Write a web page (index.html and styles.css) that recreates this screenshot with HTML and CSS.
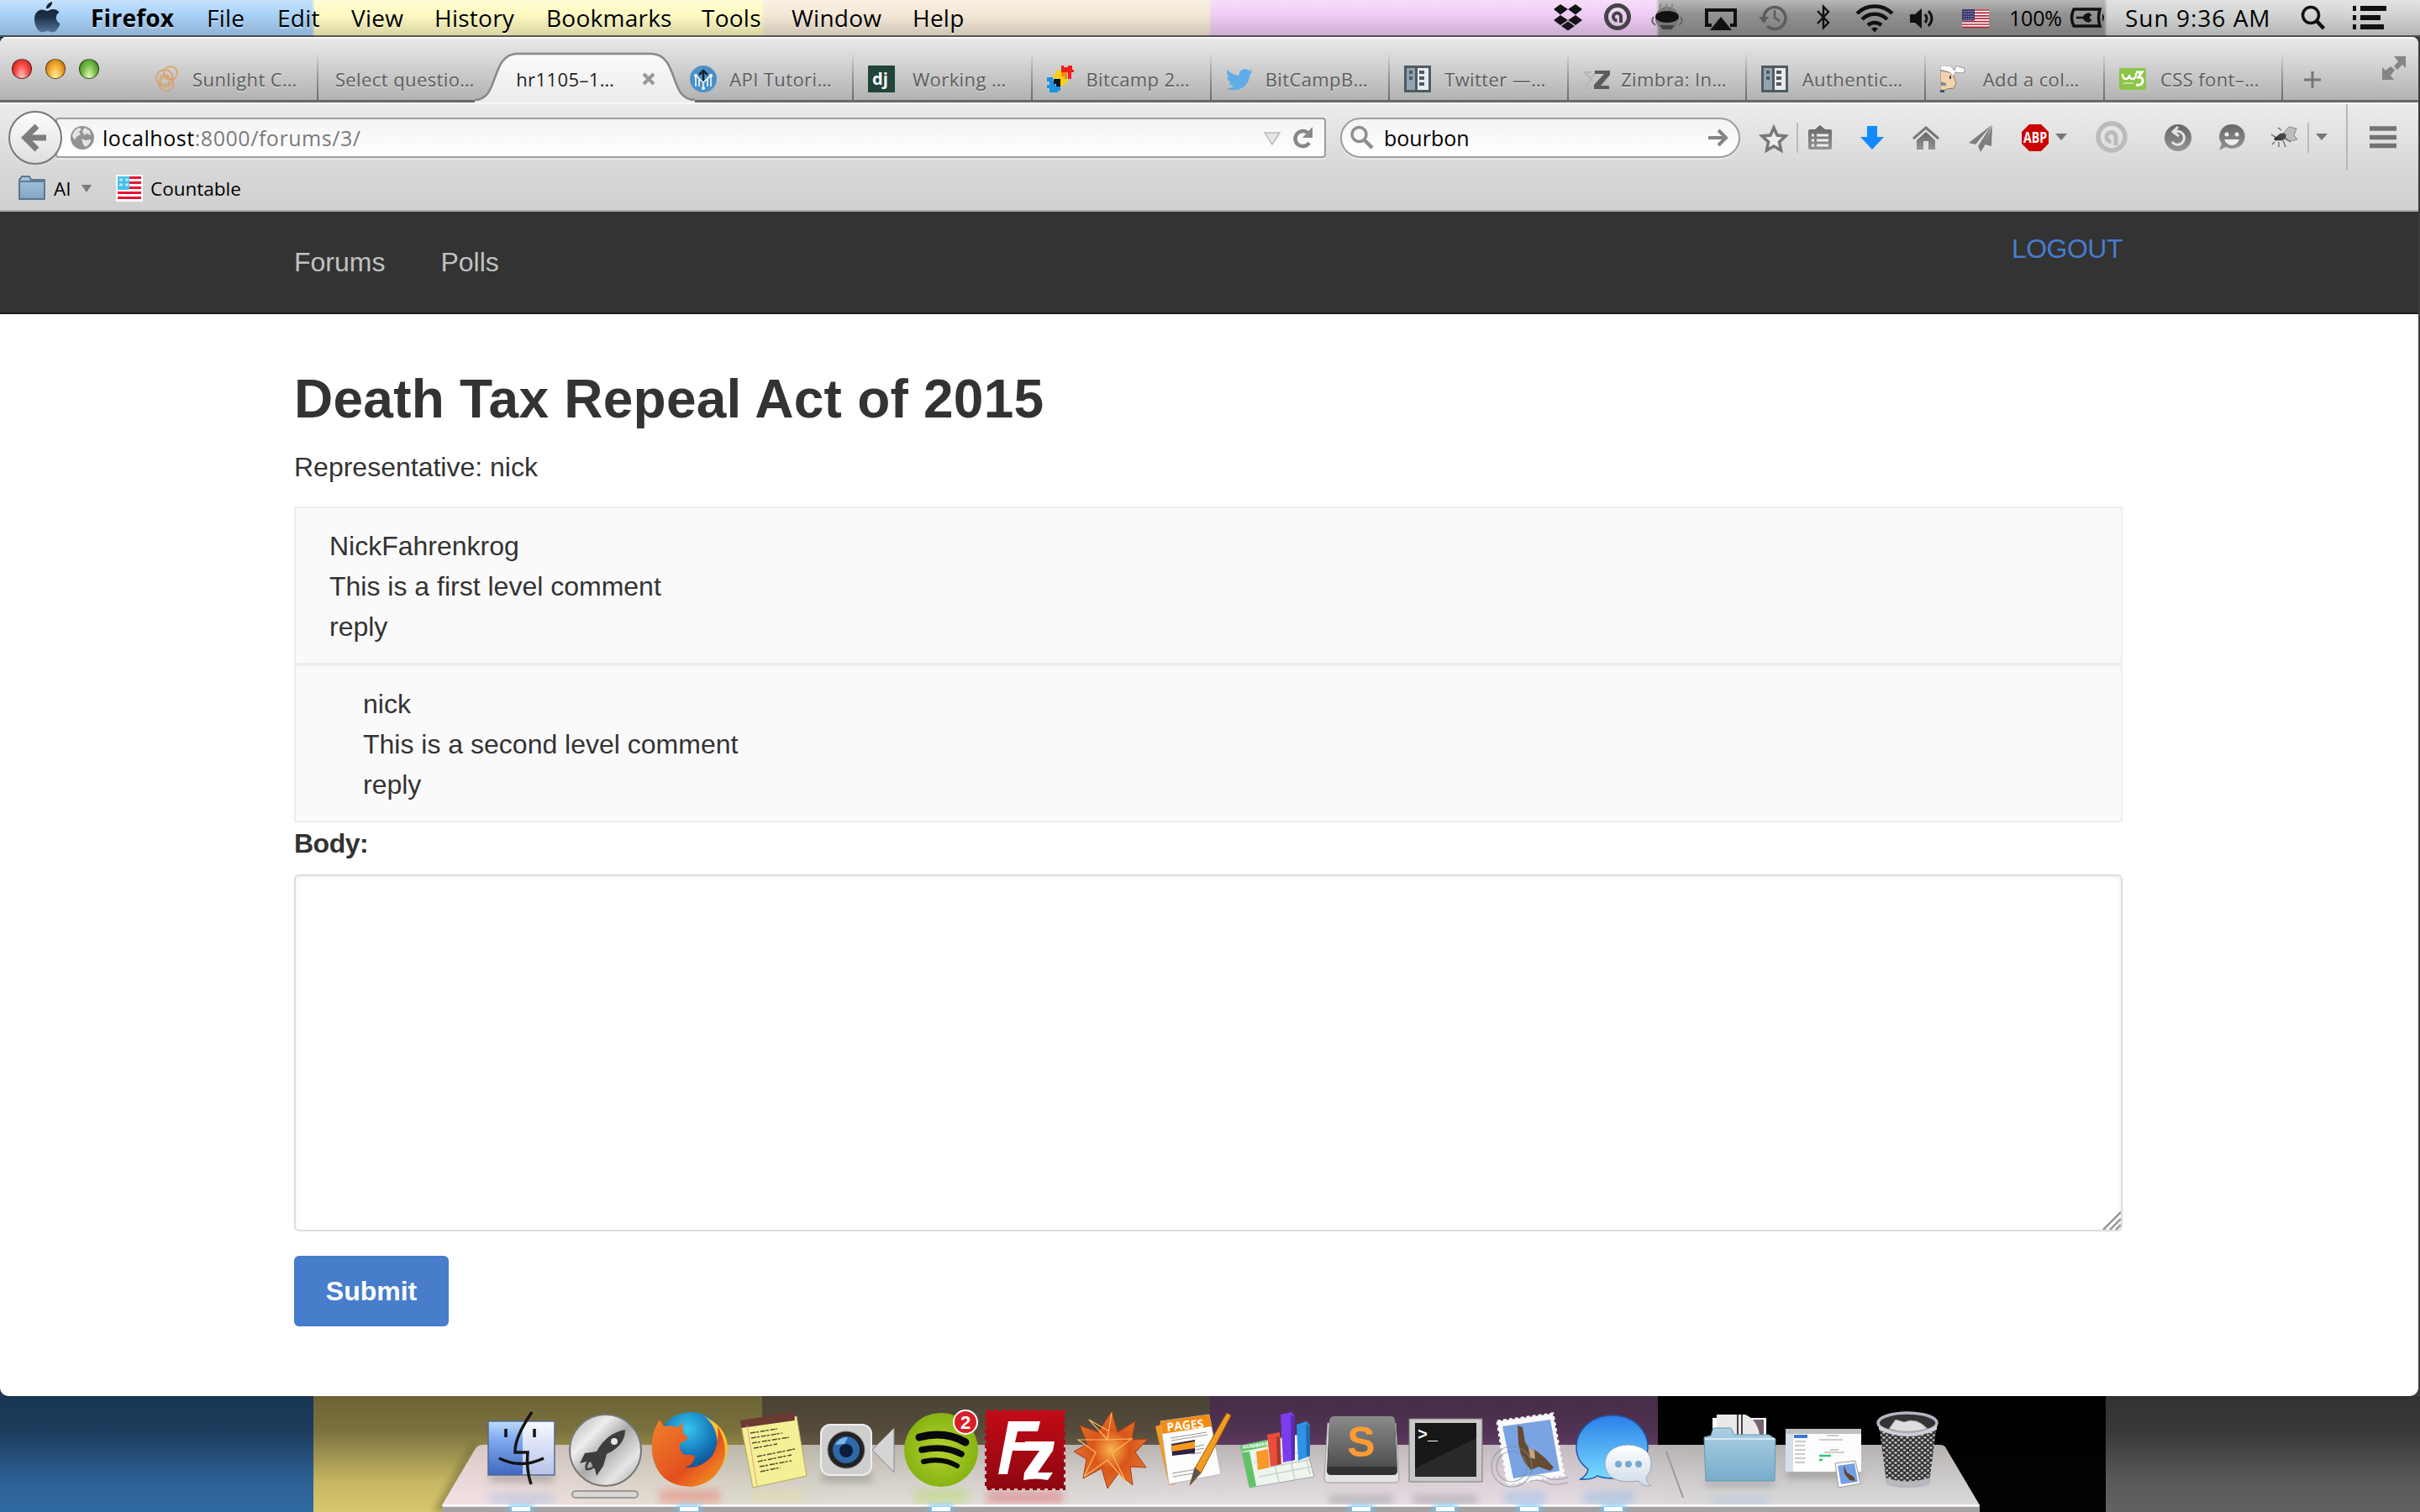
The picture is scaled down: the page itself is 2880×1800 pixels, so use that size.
FILE: index.html
```html
<!DOCTYPE html>
<html lang="en">
<head>
<meta charset="utf-8">
<title>hr1105-114</title>
<link rel="stylesheet" href="styles.css">
</head>
<body>
<header class="menubar">
  <nav class="menus">
    <svg class="apple" viewBox="0 0 32 38" width="32" height="38"><defs><linearGradient id="ap" x1="0" y1="0" x2="0" y2="1"><stop offset="0" stop-color="#10202e"/><stop offset=".5" stop-color="#1c3046"/><stop offset="1" stop-color="#55789c"/></linearGradient></defs><path fill="url(#ap)" d="M22 0c.5 4-3 8-7 8.500C14.500 5 18 1 22 0zM16 11c2 0 3.500-2 7.500-2 3 0 5.500 1.500 7 3.700-5.500 3.300-4.500 10.800 1 13.300-1.500 5-5 10.500-8.500 10.500-2.500 0-3.500-1.500-6.500-1.500s-4 1.500-6.500 1.500C5.500 36.500 1 28 1 21 1 13.500 5.500 9.500 10 9.500c2.500 0 4.500 1.500 6 1.500z"/></svg>
    <b>Firefox</b><span>File</span><span>Edit</span><span>View</span><span>History</span><span>Bookmarks</span><span>Tools</span><span>Window</span><span>Help</span>
  </nav>
  <div class="status">
    <svg viewBox="1840 0 545 42" width="545" height="42">
      <g fill="#151515"><path d="M1856 5l9 6-9 6.500-8-6.500zM1874 5l8 6-8 6.500-9-6.500zM1856 18l9 6-9 6-8-6zM1874 18l8 6-8 6-9-6zM1865 25.500l8 5.500-8 5.500-8-5.500z"/></g>
      <circle cx="1924" cy="20" r="13.500" fill="none" stroke="#444" stroke-width="5"/><path d="M1928 27V20a4.500 4.500 0 1 0-4.500 4.500" fill="none" stroke="#444" stroke-width="4"/>
      <circle cx="1983" cy="22" r="14" fill="#777"/><ellipse cx="1983" cy="20" rx="14" ry="7" fill="#111"/><path d="M1974 30h18l-4 5h-10z" fill="#444"/><path d="M1967 20q-4 6 2 10m30-10q4 6-2 10" stroke="#666" stroke-width="2" fill="none"/><path d="M1976 12q-3-4 0-7m7 7q-3-4 0-7m7 7q-3-4 0-7" stroke="#888" stroke-width="2" fill="none"/>
      <path d="M2036 30h-6V12h34v18h-6" fill="none" stroke="#111" stroke-width="4"/><path d="M2047 20l13 16h-26z" fill="#111"/>
      <g fill="none" stroke="#5c5c5c" stroke-width="3.500"><path d="M2098 21a13 13 0 1 1 4 10"/><path d="M2111 12v9l6 4" stroke-width="2.500"/></g><path d="M2092 20h12l-6 8z" fill="#5c5c5c"/>
      <path d="M2162 13l13 14-6 6V8l6 6-13 14" fill="none" stroke="#111" stroke-width="2.400"/>
      <g fill="none" stroke="#111" stroke-width="4.500"><path d="M2209 16a30 30 0 0 1 42 0"/><path d="M2215 23a21 21 0 0 1 30 0"/><path d="M2222 30a12 12 0 0 1 16 0"/></g><path d="M2226 34q4-3 8 0l-4 4.500z" fill="#111"/>
      <path d="M2272 17h6l8-7v24l-8-7h-6z" fill="#111"/><path d="M2290 17q4 5 0 10M2294 13q8 9 0 18" fill="none" stroke="#111" stroke-width="3"/>
      <g><path fill="#fff" d="M2334 11h32v22h-32z"/><path stroke="#b22234" stroke-width="1.700" d="M2334 12h32m-32 3.400h32m-32 3.400h32m-32 3.400h32m-32 3.400h32m-32 3.400h32m-32 3.400h32"/><path fill="#3c3b6e" d="M2334 11h15v13.500h-15z"/><path d="M2336 13.500h12m-12 3h12m-12 3h12m-12 3h12" stroke="#bbc" stroke-width="1" stroke-dasharray="1 1.600"/></g>
    </svg>
    <span class="pct">100%</span>
    <svg viewBox="2461 8 44 28" width="44" height="28"><path d="M2499 12h-31q-5 10 0 20h31q-3-10 0-20z" fill="none" stroke="#111" stroke-width="3.500"/><path d="M2502 17q4 5 0 10z" fill="#111"/><path d="M2471 22h9m9-3h-7m7 6h-7" stroke="#111" stroke-width="2.600"/><path d="M2487 16v12q-8-1-8-6t8-6z" fill="#111"/></svg>
    <span class="clock">Sun 9:36 AM</span>
    <svg viewBox="2737 4 34 34" width="34" height="34"><circle cx="2750" cy="18" r="9.500" fill="none" stroke="#111" stroke-width="3.500"/><path d="M2757 25l8.500 9" stroke="#111" stroke-width="4.500"/></svg>
    <svg class="list" viewBox="0 0 44 28" width="44" height="28"><path d="M2 3h4m-4 11h4m-4 11h4M11 3h31M11 14h24M11 25h28" stroke="#111" stroke-width="6"/></svg>
  </div>
</header>

<main class="window">
  <section class="tabs">
    <div class="lights"><i class="red"></i><i class="amber"></i><i class="green"></i></div>
    <div class="tab first"><svg viewBox="0 0 32 32" width="32" height="32"><g fill="none" stroke="#d9a062" stroke-width="1.500"><circle cx="13" cy="15" r="10"/><circle cx="20" cy="9" r="8"/><circle cx="15" cy="22" r="8.500"/><circle cx="13" cy="17" r="6"/></g></svg><span>Sunlight C…</span></div>
    <div class="tab plain"><span>Select questio…</span></div>
    <div class="tab active">
      <svg class="shape" viewBox="0 0 262 60" width="262" height="60"><defs><linearGradient id="tg" x1="0" y1="0" x2="0" y2="1"><stop offset="0" stop-color="#fafafa"/><stop offset="1" stop-color="#ececec"/></linearGradient></defs><path d="M0 60V57C30 57 18 3 50 2H210C244 3 230 57 262 57V60z" fill="url(#tg)"/><path d="M0 57C30 57 18 3 50 2H210C244 3 230 57 262 57" fill="none" stroke="#888" stroke-width="2.500"/></svg>
      <span>hr1105–1…</span><svg class="close" viewBox="0 0 16 16" width="16" height="16"><path d="M2 2l12 12M14 2L2 14" stroke="#999" stroke-width="4"/></svg></div>
    <div class="tab after"><svg viewBox="0 0 32 32" width="32" height="32"><circle cx="16" cy="16" r="16" fill="#4a90c8"/><path d="M16 19V6m-5 5l5-5 5 5" stroke="#123" stroke-width="2.500" fill="none"/><path d="M7 12v13M7 12l9 8 9-8v13M11 15v10M21 15v10M16 20v6" stroke="#fff" stroke-width="1.500" fill="none"/><g fill="#fff"><circle cx="7" cy="12" r="2"/><circle cx="25" cy="12" r="2"/><circle cx="16" cy="27" r="2"/></g></svg><span>API Tutori…</span></div>
    <div class="tab"><svg viewBox="0 0 32 32" width="32" height="32"><rect width="32" height="32" rx="1" fill="#20443a"/><text x="5" y="23" class="dj">dj</text></svg><span>Working …</span></div>
    <div class="tab"><svg viewBox="0 0 32 32" width="32" height="32" shape-rendering="crispEdges"><path fill="#f21d1d" d="M17 0h3v2h5V0h5v5h2v3h-3v8h-4V8h-8z"/><path fill="#fcd20a" d="M11 6h6v3h5v5h2v7h-3v3h-5v-9H8v-5h3z"/><path fill="#f7861c" d="M17 8h7v8h-3v-3h-4z"/><path fill="#1a93dc" d="M0 14h7v4h3v6h6v6h-3v2H3v-5H0v-4h3v-4H0z"/><path fill="#111" d="M8 16h8v9h-5v-3H8z"/></svg><span>Bitcamp 2…</span></div>
    <div class="tab"><svg viewBox="0 0 32 32" width="32" height="32"><path fill="#5fade8" d="M32 7c-1 .5-2 1-3.500 1 1.500-.8 2-2 2.500-3.500-1 .8-2.500 1.300-4 1.600a6.500 6.500 0 0 0-11 6C10 11.800 5.500 9 2 5 .5 8.500 1.200 12 4.200 14c-1 0-2-.3-3-.8 0 3 2 6 5.300 6.500-1 .3-2 .3-3 .1.900 2.700 3.300 4.400 6.200 4.500C7 26.500 4 27.500 0 27c11 6 28 0 28.500-16.500C30 9.500 31 8.500 32 7z"/></svg><span>BitCampB…</span></div>
    <div class="tab"><svg viewBox="0 0 32 32" width="32" height="32"><path fill="#4f5b62" d="M0 0h32v32H0z"/><path fill="#92a4b0" d="M3 3h10v26H3z"/><path fill="#e8ebee" d="M16 3h13v26H16z"/><path fill="#4f5b62" d="M6 6h4v4H6zM6 13h4v4H6zM18 6h6v4h-6zM18 13h6v4h-6zM18 20h6v4h-6z"/></svg><span>Twitter —…</span></div>
    <div class="tab"><svg viewBox="0 0 32 32" width="32" height="32"><path d="M1 8h9m4 1L2 27h8M2 8l9 10" stroke="#b5b5b5" stroke-width="2" fill="none"/><path d="M14 6h18v5L21 24h10v4H13v-5L25 10H14z" fill="#5b5b5b"/></svg><span>Zimbra: In…</span></div>
    <div class="tab"><svg viewBox="0 0 32 32" width="32" height="32"><path fill="#4f5b62" d="M0 0h32v32H0z"/><path fill="#92a4b0" d="M3 3h10v26H3z"/><path fill="#e8ebee" d="M16 3h13v26H16z"/><path fill="#4f5b62" d="M6 6h4v4H6zM6 13h4v4H6zM18 6h6v4h-6zM18 13h6v4h-6zM18 20h6v4h-6z"/></svg><span>Authentic…</span></div>
    <div class="tab"><svg viewBox="0 0 32 32" width="32" height="32"><path d="M0 6l11 2 5 5 3 8-3 6-8 1-5 2-3-1z" fill="#f5d3ae" stroke="#8a7868" stroke-width="1"/><path d="M0 0h12l5 6 2-6 5 2 5 1v5l-5 1-6-1-2 5-5-5L0 5z" fill="#fafafa" stroke="#999" stroke-width="1"/><path d="M1 19l6 2v3H1z" fill="#888"/><path d="M11 12h2v4h-2z" fill="#444"/><path d="M0 29h5v3H0z" fill="#36506e"/></svg><span>Add a col…</span></div>
    <div class="tab last"><svg viewBox="0 0 32 32" width="32" height="32"><rect y="3" width="32" height="26" rx="3" fill="#8bc648"/><path d="M4 10q0 6 4 6t4-5q0 5 4 5t4-7" fill="none" stroke="#fff" stroke-width="2.400"/><path d="M20 8h7l-4 6q6 0 5 5t-8 4" fill="none" stroke="#fff" stroke-width="3"/><path d="M5 21h12" stroke="#d8efbf" stroke-width="2" stroke-dasharray="1.500 .7"/></svg><span>CSS font–…</span></div>
    <svg class="plus" viewBox="0 0 22 22" width="22" height="22"><path d="M11 1v20M1 11h20" stroke="#777" stroke-width="3"/></svg>
    <svg class="full" viewBox="0 0 28 28" width="28" height="28"><path fill="#858585" d="M14 0h14v14l-4-4-6 6-4-4 5-6zM0 13l4 4 6-5 5 4-5 7 4 5H0z"/></svg>
  </section>

  <section class="toolbar">
    <svg class="back" viewBox="0 0 64 66" width="64" height="66"><defs><linearGradient id="bk" x1="0" y1="0" x2="0" y2="1"><stop offset="0" stop-color="#fdfdfd"/><stop offset="1" stop-color="#dedede"/></linearGradient></defs><circle cx="32" cy="32" r="31" fill="url(#bk)" stroke="#777" stroke-width="2"/><path d="M34 18L20 32l14 14M21 32h24" fill="none" stroke="#7d7d7d" stroke-width="7"/></svg>
    <div class="url">
      <svg viewBox="0 0 28 28" width="28" height="28"><circle cx="14" cy="14" r="14" fill="#939393"/><path fill="#e4e4e4" d="M2 12q1-7 8-10l3 2-3 3 2 3-5 3-2 4zM17 2l6 4 1 5-5-2-3 2-2-5zM13 15l5 2 6-1q1 4-6 9l-3-3z"/></svg>
      <span class="address"><b>localhost</b>:8000/forums/3/</span>
      <svg viewBox="0 0 60 28" width="60" height="28"><path d="M1 8h18L10 22z" fill="#e6e6e6" stroke="#bbb" stroke-width="1.500"/><path d="M54 20a9 9 0 1 1-2-12" fill="none" stroke="#888" stroke-width="4.500"/><path d="M58 1v13H46z" fill="#888"/></svg>
    </div>
    <div class="search">
      <svg viewBox="0 0 28 30" width="28" height="30"><circle cx="10.500" cy="11" r="8.500" fill="none" stroke="#8e8e8e" stroke-width="3.500"/><path d="M17 18l9 9" stroke="#8e8e8e" stroke-width="4.500"/></svg>
      <span>bourbon</span>
      <svg viewBox="0 0 24 22" width="24" height="22"><path d="M0 11h20M12 2l9 9-9 9" fill="none" stroke="#848484" stroke-width="4"/></svg>
    </div>
    <svg class="tools" viewBox="2078 122 800 84" width="800" height="84">
      <defs><linearGradient id="gr" x1="0" y1="0" x2="0" y2="1"><stop offset="0" stop-color="#666"/><stop offset="1" stop-color="#959595"/></linearGradient></defs>
      <path d="M2111 152l4 9 10 1-7.500 7 2 10-8.500-5-8.500 5 2-10-7.500-7 10-1z" fill="#eee" stroke="#777" stroke-width="3.600"/>
      <path d="M2139 146v36M2747 146v36" stroke="#bababa" stroke-width="2"/><path d="M2793 124v78" stroke="#b4b7bb" stroke-width="2"/>
      <path d="M2152 156q0-2 2-2h6l6-5 6 5h6q2 0 2 2v20q0 2-2 2h-24q-2 0-2-2z" fill="url(#gr)"/><path d="M2162 161h14m-14 6h14m-14 6h14M2156 161h3m-3 6h3m-3 6h3" stroke="#eee" stroke-width="3"/>
      <path d="M2222 150h12v13h8l-14 15-14-15h8z" fill="#118aff"/>
      <path d="M2277 165l15-13 15 13" fill="none" stroke="#777" stroke-width="3"/><path d="M2281 167l11-10 11 10v11h-8v-10h-6v10h-8z" fill="url(#gr)"/>
      <path d="M2370 149l-27 21 8 2zM2370 149l-16 25 3 7 4-6zM2371 149l-9 23 8 2z" fill="#7d7d7d"/>
      <path d="M2415 148h14l9 9v14l-9 9h-14l-9-9v-14z" fill="#cb0000"/><text x="2408" y="170" class="abp" textLength="28" lengthAdjust="spacingAndGlyphs">ABP</text>
      <g fill="#777"><path d="M2446 159h14l-7 8zM2756 159h14l-7 8z"/></g>
      <circle cx="2513" cy="163" r="16" fill="none" stroke="#bbb" stroke-width="5.500"/><path d="M2518 173v-10a5.500 5.500 0 1 0-5.500 5.500" fill="none" stroke="#bbb" stroke-width="5"/>
      <circle cx="2592" cy="164" r="16" fill="url(#gr)"/><path d="M2588 157a8 8 0 1 1-3 12M2592 151l-6 6 7 5" fill="none" stroke="#e4e4e4" stroke-width="3"/>
      <path d="M2656 148a15 14.500 0 1 1-7 27l-8 4 3-8a15 14.500 0 0 1 12-23z" fill="url(#gr)"/><circle cx="2650" cy="160" r="2.500" fill="#eee"/><circle cx="2662" cy="160" r="2.500" fill="#eee"/><path d="M2647 166h18q-3 7-9 7t-9-7z" fill="#eee"/>
      <g><path d="M2716 160l8-9 9 2-3 8 4 5-9 2-8-3z" fill="#bdbdbd" stroke="#8a8a8a"/><ellipse cx="2715" cy="163" rx="6" ry="4" fill="#444" transform="rotate(-25 2715 163)"/><circle cx="2709" cy="165" r="2.500" fill="#333"/><path d="M2703 160l6 4m-2 5l-3 3m8-3v6m5-8l3 8m-1-11l7 5m-11-14l-4-3" stroke="#666" stroke-width="1.300" fill="none"/></g>
      <path d="M2820 153h32M2820 163.500h32M2820 173.500h32" stroke="#737373" stroke-width="5.500"/>
    </svg>
  </section>

  <section class="bookmarks">
    <svg viewBox="0 0 32 30" width="32" height="30"><defs><linearGradient id="fo" x1="0" y1="0" x2="0" y2="1"><stop offset="0" stop-color="#a9c5da"/><stop offset="1" stop-color="#7fa6c4"/></linearGradient></defs><path d="M1 28V5l3-4h9l2 4h16v23z" fill="url(#fo)" stroke="#3f5f78" stroke-width="1.500"/><path d="M1 7h30" stroke="#5c7f9a" stroke-width="2"/></svg>
    <span class="ai">AI</span>
    <svg class="caret" viewBox="0 0 12 9" width="12" height="9"><path d="M0 0h12L6 9z" fill="#7a7a7a"/></svg>
    <svg viewBox="0 0 32 32" width="32" height="32"><path fill="#fff" d="M0 0h32v32H0z"/><path d="M2 3.500h28m-28 6h28m-28 6h28m-28 6h28m-28 6h28" stroke="#ee1133" stroke-width="3"/><path fill="#45c0ec" d="M2 2h14v16H2z"/><path d="M4 6h4m3 0h4m-11 6h4m3 0h4" stroke="#b3e7fa" stroke-width="3"/></svg>
    <span class="count">Countable</span>
  </section>

  <section class="page">
    <nav class="navbar"><a>Forums</a><a>Polls</a><a class="logout">LOGOUT</a></nav>
    <article class="content">
      <h1>Death Tax Repeal Act of 2015</h1>
      <p class="rep">Representative: nick</p>
      <div class="comment"><p>NickFahrenkrog</p><p>This is a first level comment</p><p>reply</p></div>
      <div class="comment nested"><p>nick</p><p>This is a second level comment</p><p>reply</p></div>
      <label for="body">Body:</label>
      <div class="field"><textarea id="body"></textarea><svg viewBox="0 0 22 22" width="22" height="22"><path d="M1 22L22 1M9 22L22 9M16 22l6-6" stroke="#999" stroke-width="2.500"/></svg></div>
      <button type="button">Submit</button>
    </article>
  </section>
</main>

<footer class="desk">
<svg viewBox="0 1662 2880 138" width="2880" height="138">
  <defs>
    <linearGradient id="shade" x1="0" y1="0" x2="0" y2="1"><stop offset="0" stop-color="#000" stop-opacity=".5"/><stop offset=".3" stop-color="#000" stop-opacity=".43"/><stop offset=".75" stop-color="#000" stop-opacity=".08"/><stop offset="1" stop-color="#000" stop-opacity="0"/></linearGradient>
    <linearGradient id="shelf" x1="0" y1="0" x2="0" y2="1"><stop offset="0" stop-color="#aaa6a3"/><stop offset=".5" stop-color="#cdc9c9"/><stop offset="1" stop-color="#e8e4e6"/></linearGradient>
    <linearGradient id="tintL" x1="0" y1="0" x2="1" y2="0"><stop offset="0" stop-color="#ffe3ea" stop-opacity=".6"/><stop offset=".2" stop-color="#dfd9b0" stop-opacity=".3"/><stop offset=".5" stop-color="#e8dde5" stop-opacity=".25"/><stop offset=".72" stop-color="#efd8ee" stop-opacity=".4"/><stop offset=".82" stop-color="#ccc" stop-opacity=".3"/></linearGradient>
    <linearGradient id="finderL" x1="0" y1="0" x2="0" y2="1"><stop offset="0" stop-color="#bcdcfa"/><stop offset=".3" stop-color="#86aef0"/><stop offset="1" stop-color="#3f68c0"/></linearGradient>
    <linearGradient id="finderR" x1="0" y1="0" x2="0" y2="1"><stop offset="0" stop-color="#f6f9ff"/><stop offset="1" stop-color="#b7c3ea"/></linearGradient>
    <linearGradient id="metal" x1="0" y1="0" x2="1" y2="1"><stop offset="0" stop-color="#aaa"/><stop offset=".3" stop-color="#eee"/><stop offset=".5" stop-color="#aaa"/><stop offset=".75" stop-color="#e6e6e6"/><stop offset="1" stop-color="#999"/></linearGradient>
    <radialGradient id="globe" cx=".45" cy=".25" r=".8"><stop offset="0" stop-color="#35c6f0"/><stop offset=".5" stop-color="#1474b8"/><stop offset="1" stop-color="#10265c"/></radialGradient>
    <linearGradient id="fox" x1="0" y1="0" x2="1" y2="1"><stop offset="0" stop-color="#f0812a"/><stop offset=".6" stop-color="#e2501f"/><stop offset="1" stop-color="#f7a521"/></linearGradient>
    <radialGradient id="spot"><stop offset="0" stop-color="#b6d32e"/><stop offset="1" stop-color="#86b313"/></radialGradient>
    <linearGradient id="fz" x1="0" y1="0" x2="0" y2="1"><stop offset="0" stop-color="#c30b17"/><stop offset="1" stop-color="#8c0710"/></linearGradient>
    <radialGradient id="spike"><stop offset="0" stop-color="#f9b34a"/><stop offset=".5" stop-color="#d9551a"/><stop offset="1" stop-color="#e0702c"/></radialGradient>
    <linearGradient id="bub" x1="0" y1="0" x2="0" y2="1"><stop offset="0" stop-color="#2a7fe8"/><stop offset="1" stop-color="#7bdcff"/></linearGradient>
    <linearGradient id="wht" x1="0" y1="0" x2="0" y2="1"><stop offset="0" stop-color="#fff"/><stop offset="1" stop-color="#cfdce8"/></linearGradient>
    <linearGradient id="fold" x1="0" y1="0" x2="0" y2="1"><stop offset="0" stop-color="#abcfe4"/><stop offset="1" stop-color="#78accb"/></linearGradient>
    <linearGradient id="subl" x1="0" y1="0" x2="0" y2="1"><stop offset="0" stop-color="#8a8a8a"/><stop offset="1" stop-color="#505050"/></linearGradient>
    <pattern id="mesh" width="7" height="6" patternUnits="userSpaceOnUse"><path fill="#333" d="M0 0h7v6H0z"/><ellipse cx="2" cy="1.500" rx="1.700" ry="1.300" fill="#cfcfcf"/><ellipse cx="5.500" cy="4.500" rx="1.700" ry="1.300" fill="#bbb"/></pattern>
    <filter id="soft" x="-30%" y="-30%" width="160%" height="160%"><feGaussianBlur stdDeviation="5"/></filter>
    <filter id="glow" x="-50%" y="-100%" width="200%" height="300%"><feGaussianBlur stdDeviation="3"/></filter>
  </defs>
  <path fill="#316aa3" d="M0 1662h373v138H0z"/><path fill="#d8c76c" d="M373 1662h534v138H373z"/><path fill="#948468" d="M907 1662h533v138H907z"/><path fill="#8d5890" d="M1440 1662h533v138h-533z"/><path fill="#020202" d="M1973 1662h533v138h-533z"/><path fill="#616362" d="M2506 1662h374v138h-374z"/>
  <path fill="url(#shade)" d="M0 1662h2880v138H0z"/>
  <path d="M565 1722L530 1800h-14l49-85z" fill="#000" opacity=".3" filter="url(#soft)"/>
  <path d="M575 1720H2309q6 0 8 6l39 66v8H526v-8l39-66q3-6 10-6z" fill="url(#shelf)"/>
  <path d="M575 1720H2309q6 0 8 6l39 66H526l39-66q3-6 10-6z" fill="url(#tintL)"/>
  <path d="M526 1793h1830v7H526z" fill="#a5a1a3"/>
  <g filter="url(#soft)" opacity=".28"><path fill="#78a0ee" d="M582 1778h76v12h-76z"/><path fill="#f04030" d="M785 1773h72v17h-72z"/><path fill="#e9e570" d="M895 1776h60v10h-60z"/><path fill="#9add20" d="M1088 1773h64v17h-64z"/><path fill="#e01525" d="M1175 1775h90v15h-90z"/><path fill="#555" d="M1582 1780h76v10h-76zM1682 1780h76v10h-76z"/><path fill="#50a8ef" d="M1885 1776h60v14h-60zM1790 1776h50v14h-50zM2036 1783h70v6h-70z"/></g>
  <g filter="url(#soft)" opacity=".4"><path fill="#666" d="M583 1754h76v10h-76zM978 1754h60v10h-60zM2030 1763h82v6h-82zM2126 1750h88v10h-88z"/></g>
  <path d="M527 1792.500h1828" stroke="#fff" stroke-width="2.500"/>

  <g><path d="M581 1692h41v64h-41z" fill="url(#finderL)"/><path d="M622 1692h38v64h-38z" fill="url(#finderR)"/><path d="M581 1692h79v64h-79z" fill="none" stroke="#566a8c" stroke-width="1.500"/><path d="M633 1681Q612 1712 613 1729h15q-2 20 4 38" fill="none" stroke="#141414" stroke-width="3.500"/><path d="M602 1701v10m34-10v10" stroke="#111" stroke-width="3.500"/><path d="M594 1736q26 13 53 0" fill="none" stroke="#111" stroke-width="3.500"/></g>

  <g><circle cx="720.500" cy="1726.500" r="42.500" fill="url(#metal)" stroke="#777" stroke-width="2"/><path d="M744 1702q-22 4-34 26l-14 2-6 12 12-3 6 10 2 8 8-12 4-14q22-10 22-29z" fill="#3d3d3d"/><circle cx="731" cy="1716" r="4" fill="#e5e5e5"/><path d="M706 1737q-10 3-8 12 8 1 10-7" fill="none" stroke="#3d3d3d" stroke-width="2.500"/><rect x="681" y="1775" width="78" height="8" rx="4" fill="#d8d8d4" stroke="#9a9a96" stroke-width="2"/></g>

  <g><circle cx="822" cy="1721" r="40" fill="url(#globe)"/><path d="M838 1686q16 12 16 36-8 22-30 26l-15 4 30 8q25-8 27-38-2-24-28-36z" fill="#f9c22d"/><path d="M785 1690l5 8q12-2 16 2l6-7 1 14q8 3 4 7l-8 5q-1 9 6 13 10-1 12 2-2 11-12 13 18 2 31-12 10-12 8-37 14 25 6 44-10 25-38 28-40-1-46-40-2-24 9-40z" fill="url(#fox)"/></g>

  <g><path d="M882 1697l66-11 12 71-64 14z" fill="#f5ef96" stroke="#b4aa62"/><path d="M881 1691l64-10 1 10-64 9z" fill="#6b3b32"/><path d="M889 1697l12 72" stroke="#e2a37d"/><path d="M893 1706l32-5m-31 11l37-6m-36 12l44-7m-42 13l28-5m-24 15l45-9m-44 15l40-8m-38 14l38-7m-37 13l24-5" stroke="#544f2c" stroke-width="1.500" stroke-dasharray="6 1 3 2"/></g>

  <g><path d="M1038 1726l26-26v53z" fill="#d5d5d5" stroke="#888"/><rect x="977" y="1696" width="60" height="60" rx="11" fill="#cfcfcf" stroke="#eee" stroke-width="2"/><circle cx="1007" cy="1726" r="22" fill="#222" stroke="#777"/><circle cx="1007" cy="1726" r="16" fill="#2f68a8"/><circle cx="1007" cy="1727" r="8" fill="#0b1c3c"/><path d="M994 1720q5-9 15-9l-4 8z" fill="#79b8ed"/></g>

  <g><circle cx="1120" cy="1726" r="44" fill="url(#spot)"/><g fill="none" stroke="#080808" stroke-linecap="round"><path d="M1094 1711q30-8 55 6" stroke-width="9"/><path d="M1097 1726q27-6 47 5" stroke-width="7.500"/><path d="M1099 1740q22-5 40 5" stroke-width="6"/></g><circle cx="1149" cy="1693" r="14" fill="#d81e2a" stroke="#fff" stroke-width="2"/><text x="1149" y="1701" class="badge">2</text></g>

  <g><path d="M1174 1680h92v92h-92z" fill="url(#fz)" stroke="url(#fz)" stroke-width="4" stroke-dasharray="5 4"/><path d="M1174 1680h92v92h-92z" fill="url(#fz)"/><path d="M1200 1692h38l-3 12h-24l-3 13h21l-2 10h-22l-6 28h-11z" fill="#fff"/><path d="M1220 1716h35l-2 11-18 26h18l-6 9q-14-3-29 0l1-9 18-26h-19z" fill="#fff"/></g>

  <g><path d="M1323 1680l7 25 21-13-4 22 19-1-15 16 13 18-19-1 3 22-17-14-13 18-7-24-22 12 4-23-15-9 16-9-9-22 22 8z" fill="url(#spike)" stroke="#a93a12"/><path d="M1323 1682l-5 32 29-1-24 17 17 34-22-26-28 20 14-29-21-15 35 0-22-24 24 14" fill="none" stroke="#ffb860" stroke-width="1.200"/></g>

  <g><path d="M1375 1698l16-5 8 74-8 1z" fill="#f39a1d"/><path d="M1381 1692l58-8 14 71-62 12z" fill="#fdfdfd" stroke="#bbb"/><path d="M1381 1692l58-8 3 14-59 9z" fill="#f48b12"/><text x="1389" y="1704" class="pages" transform="rotate(-6 1389 1704)">PAGES</text><path d="M1393 1712l43-7m-42 10l43-7m-42 46l35-6m-34 10l30-5m-8-30l15-3m-15 7l15-3m-15 7l12-2" stroke="#999" stroke-width="1.200"/><path d="M1394 1719l28-5v16l-27 3z" fill="#302041"/><path d="M1394 1721l28-5v8l-27 4z" fill="#f6991c"/><path d="M1460 1682l5 3-36 69-13 14 6-20z" fill="#f39c1e" stroke="#9d5c0d"/><path d="M1422 1747l7 6-13 15z" fill="#555"/></g>

  <g><path d="M1476 1721l74-14 14 51-77 13z" fill="#edf5ed" stroke="#9aa"/><path d="M1476 1721l31-7 2 8-31 6zM1478 1729l9-1 8 41-8 2z" fill="#62c268"/><text x="1479" y="1725" class="numbers" transform="rotate(-8 1479 1725)">NUMBERS</text><path d="M1493 1741l60-14m-57 22l62-11m-60 20l64-12M1512 1722l10 43m9-48l10 44m7-49l11 43" stroke="#b9c5bd"/><path d="M1495 1728l14-3 2 22-14 3z" fill="#fa9928"/><path d="M1508 1708l15-3 2 38-13 3z" fill="#e84d3d"/><path d="M1524 1684l13-3 4 5v52l-14 3z" fill="#7b3df0"/><path d="M1543 1696l12-4 4 5v36l-14 6z" fill="#2e93e8"/><path d="M1536 1684l5 3v51l-4 2zM1554 1695l5 3v35l-4 2zM1519 1709l5 3v31l-4 1z" fill="#0004"/></g>

  <g><path d="M1580 1694h81l4 66q0 5-5 5h-79q-5 0-5-5z" fill="#e4e4e4" stroke="#999"/><path d="M1588 1686h67q5 0 5 5l3 60q0 5-5 5h-74q-5 0-5-5l3-60q1-5 6-5z" fill="#333"/><path d="M1588 1686h67q5 0 5 5l2 55h-82l2-55q1-5 6-5z" fill="url(#subl)"/><text x="1620" y="1734" class="sub">S</text></g>

  <g><path d="M1677 1689h87v75h-87z" fill="#c9c9c9" stroke="#777"/><path d="M1684 1694h73v64h-73z" fill="#171717"/><path d="M1757 1712l-73 36v10h73z" fill="#292929"/><text x="1687" y="1714" class="term">&gt;_</text></g>

  <g><path d="M1782 1692l66-9 13 73-67 11z" fill="#fafafa" stroke="#fafafa" stroke-width="3" stroke-dasharray="4 3"/><path d="M1788 1698l57-8 11 61-55 9z" fill="#7aa3e3"/><path d="M1806 1697l6 2 3 18 5 8 8 2 10 8 11 12-4 4-14-5-9 4-7-8-5-10-3-14z" fill="#664a31"/><path d="M1819 1724l7 3 1 10-6-2z" fill="#c6a476"/></g>
  <g fill="none" stroke="#7a8898" stroke-width="1.200" opacity=".6"><circle cx="1799" cy="1746" r="24"/><circle cx="1799" cy="1746" r="18"/><path d="M1820 1764q11-4 20 1t26 0M1820 1758q11-4 20 1t26 0"/></g>

  <g><path d="M1919 1685c25 0 42 17 42 38s-17 37-42 37q-11 0-18-3-7 5-20 4 8-5 9-12-14-10-14-26c0-21 18-38 43-38z" fill="url(#bub)" stroke="#2058a8" stroke-width="1.500"/><path d="M1938 1720q27 2 27 23 0 10-6 15 1 8 6 11-10 1-15-6-38 5-40-20 1-22 28-23z" fill="url(#wht)" stroke="#9ab"/><g fill="#7ba9cc"><circle cx="1926" cy="1743" r="4"/><circle cx="1938" cy="1743" r="4"/><circle cx="1950" cy="1743" r="4"/></g></g>

  <path d="M1983 1728l20 55" stroke="#999" stroke-width="2"/>
  <g><path d="M2038 1688h64v26h-64z" fill="#fff"/><path d="M2086 1690h13v18h-13z" fill="#746274"/><path d="M2043 1684h34q14 6 17 24h-51z" fill="#e9e9e9"/><path d="M2068 1684v24m5-24v24" stroke="#444" stroke-width="2"/><path d="M2028 1711l8-2 3-9h21l4 8h41l8 5-1 50h-82z" fill="url(#fold)" stroke="#6898b5"/><path d="M2029 1713h83" stroke="#d3e8f4" stroke-width="2"/></g>

  <g><path d="M2125 1701h90v51h-90z" fill="#fdfdfd"/><path d="M2125 1701h90v6h-90z" fill="#c0c0c0"/><path d="M2125 1707h9v45h-9z" fill="#d5dfeb"/><path d="M2135 1708h16v4h-16z" fill="#3c77d6"/><path d="M2136 1716h13m-13 5h12m-12 5h13m-13 5h12m-12 5h13m-13 5h12M2174 1709h14m-17 5h22m-15 12h10m-23-12h6m0 15h24" stroke="#bcbcbc" stroke-width="1.500"/><path d="M2165 1733h14m-14 5h4" stroke="#2fc876" stroke-width="2.500"/><path d="M2184 1742l24-3 6 27-26 5z" fill="#fff" stroke="#999"/><path d="M2187 1745l20-3 4 22-20 3z" fill="#739ee2"/><path d="M2194 1744l4 9 8 5 2 5-7-1-6-8z" fill="#60452c"/></g>

  <g><path d="M2237 1703l8 62q25 12 51 0l8-62z" fill="url(#mesh)"/><path d="M2244 1759q26 9 53 0l-2 9q-24 7-49 0z" fill="#b7b7bf"/><ellipse cx="2270" cy="1694" rx="35" ry="12" fill="#333" stroke="#b5b5c4" stroke-width="3.500"/><path d="M2248 1701l8-11 10 3 7-2 8 1 6 3 7 6q-25 7-46 0z" fill="#dedede" stroke="#999"/><path d="M2236 1697q34 19 69 0v5q-34 16-69 0z" fill="#cfcfd9"/></g>

  <g fill="#6cc8ff" filter="url(#glow)"><path d="M606 1792h28v8h-28zM806 1792h28v8h-28zM1106 1792h28v8h-28zM1606 1792h28v8h-28zM1706 1792h28v8h-28zM1806 1792h28v8h-28zM1906 1792h28v8h-28z"/></g>
  <path fill="#fff" d="M609 1794h22v5h-22zM809 1794h22v5h-22zM1109 1794h22v5h-22zM1609 1794h22v5h-22zM1709 1794h22v5h-22zM1809 1794h22v5h-22zM1909 1794h22v5h-22z"/>
</svg>
</footer>
</body>
</html>
```
FILE: styles.css
```css
* { box-sizing: border-box; }
body {
  margin: 0;
  width: 2880px;
  height: 1800px;
  overflow: hidden;
  display: flex;
  flex-direction: column;
  background: linear-gradient(90deg, #1c3a58 0 1440px, #3a3d3b 1440px);
  font-family: "Open Sans", "Noto Sans", sans-serif;
}
svg { display: block; flex: none; }
h1, p { margin: 0; }

.menubar {
  height: 44px;
  flex: none;
  display: flex;
  justify-content: space-between;
  font-size: 28px;
  line-height: 44px;
  color: #000;
  border-bottom: 2px solid rgba(0, 0, 0, .65);
  background:
    linear-gradient(rgba(255, 255, 255, .35), rgba(255, 255, 255, 0) 40%, rgba(0, 0, 0, .15)),
    linear-gradient(90deg, #a9d2fa 371px, #fffbc2 375px 906px, #f5e9d7 910px 1438px, #f0cdf6 1442px 1971px, #929292 1975px 2504px, #d2d5d3 2508px);
}
.menus {
  display: grid;
  grid-template-columns: 68px 138px 84px 88px 99px 133px 185px 107px 144px 80px;
  padding-left: 40px;
  letter-spacing: .25px;
  text-shadow: 0 2px 1px rgba(255, 255, 255, .4);
  white-space: nowrap;
}
.menus span, .menus b { line-height: 42px; }
.apple { margin-top: 2px; }
.status { display: flex; align-items: center; padding-right: 38px; height: 42px; }
.pct { width: 70px; margin-left: 5px; font-size: 25px; letter-spacing: -.2px; }
.clock { width: 206px; padding-left: 24px; margin-right: 26px; white-space: nowrap; letter-spacing: 1px; }
.list { margin-left: 27px; }

.window {
  width: 2878px;
  height: 1618px;
  flex: none;
  display: flex;
  flex-direction: column;
  background: #fff;
  border-radius: 8px 8px 10px 10px;
  overflow: hidden;
}
.tabs {
  height: 78px;
  flex: none;
  display: flex;
  align-items: flex-end;
  background: linear-gradient(#e9e9e9, #d2d2d2 45%, #b2b2b2);
  box-shadow: inset 0 2px #fafafa;
  border-bottom: 3px solid #6a6a6a;
  font-size: 22px;
  color: #5c5c5c;
}
.lights { display: flex; gap: 16px; width: 166px; padding: 0 0 25px 14px; }
.lights i { width: 24px; height: 24px; border-radius: 50%; border: 1px solid #0008; }
.red { background: radial-gradient(ellipse at 50% 95%, #ffc9c4, #f5453f 55%, #a81c18); }
.amber { background: radial-gradient(ellipse at 50% 95%, #fff3a0, #f0a52b 55%, #9c5d10); }
.green { background: radial-gradient(ellipse at 50% 95%, #e6ffb8, #70b942 55%, #3b6d20); }
.tab {
  width: 212.6px;
  height: 56px;
  flex: none;
  display: flex;
  align-items: center;
  padding: 5px 18px 0 17px;
  border-right: 2px solid;
  border-image: linear-gradient(rgba(90, 90, 90, 0), #6a6a6a) 1;
  white-space: nowrap;
}
.tab span { flex: 1; text-align: center; letter-spacing: .4px; padding-left: 9px; line-height: 30px; text-shadow: 0 1px rgba(255, 255, 255, .6); }
.tab.plain { border: 0; }
.tab.plain span { padding: 0 5px 0 0; }
.tab.active { position: relative; border: 0; color: #222; padding-left: 23px; padding-right: 24px; }
.tab.active span { position: relative; padding: 0; text-align: left; }
.shape { position: absolute; left: -26px; bottom: -3px; }
.close { position: relative; }
.plus { margin: 0 72px 13px 24px; }
.full { margin-bottom: 24px; }

.toolbar {
  height: 84px;
  flex: none;
  display: flex;
  align-items: center;
  padding-left: 10px;
  background: linear-gradient(#ececec, #d7d7d7);
  box-shadow: inset 0 2px #f7f7f7;
  font-size: 25px;
}
.back { position: relative; z-index: 1; margin-top: 2px; }
.url, .search {
  height: 48px;
  display: flex;
  align-items: center;
  border: 2px solid #9d9d9d;
  background: linear-gradient(#f4f4f4, #fff);
  box-shadow: 0 2px rgba(255, 255, 255, .4);
}
.url { width: 1512px; margin-left: -8px; padding: 0 12px 0 16px; border-radius: 4px; gap: 10px; }
.address { flex: 1; color: #7b7b7b; letter-spacing: .55px; }
.address b { font-weight: 400; color: #000; }
.search { width: 476px; margin-left: 17px; padding: 0 12px 0 10px; border-radius: 24px; gap: 12px; }
.search span { flex: 1; }
.tools { margin-left: 7px; }

.bookmarks {
  height: 46px;
  flex: none;
  display: flex;
  align-items: center;
  padding: 0 0 8px 22px;
  background: linear-gradient(#d7d7d7, #d0d0d0);
  border-bottom: 2px solid #aaa;
  font-size: 22.500px;
}
.ai { width: 33px; padding-left: 10px; }
.caret { margin: 0 29px 0 10px; }
.count { padding-left: 9px; }

.page { flex: 1; font-family: "Liberation Sans", Arial, sans-serif; font-size: 32px; line-height: 48px; color: #333; }
.navbar {
  height: 122px;
  display: flex;
  align-items: center;
  gap: 66px;
  padding: 0 352px 0 350px;
  background: #333;
  border-bottom: 2px solid #1a1a1a;
  color: #c1c1c1;
}
.logout { margin: 0 0 33px auto; color: #477dca; letter-spacing: -.5px; }
.content { padding: 65px 352px 0 350px; }
h1 { font-size: 64px; line-height: 72px; letter-spacing: .24px; }
.rep { margin: 21px 0 23px; }
.comment { height: 188px; padding: 21px 40px 0; border: 2px solid #eee; background: #fafafa; }
.nested { padding-left: 80px; }
label { display: block; font-weight: 700; padding-top: 1px; height: 62px; letter-spacing: -.5px; }
.field { position: relative; height: 425px; }
textarea {
  display: block;
  width: 100%;
  height: 100%;
  border: 2px solid #ddd;
  border-radius: 6px;
  box-shadow: inset 0 2px 6px rgba(0, 0, 0, .06);
  resize: none;
  background: #fff;
}
.field svg { position: absolute; right: 2px; bottom: 2px; }
button {
  margin-top: 29px;
  width: 184px;
  height: 84px;
  border: 0;
  border-radius: 6px;
  background: #477dca;
  color: #fff;
  font: 700 32px "Liberation Sans", Arial, sans-serif;
}

.desk { height: 138px; }
.dj { font: 700 20px "Open Sans", sans-serif; fill: #fff; }
.abp { font: 700 17px "Open Sans", sans-serif; fill: #fff; }
.badge { font: 700 22px "Liberation Sans", sans-serif; fill: #fff; text-anchor: middle; }
.pages { font: 700 14px "Open Sans", sans-serif; fill: #fff; }
.numbers { font: 700 6px "Open Sans", sans-serif; fill: #fff; }
.sub { font: 700 50px "Liberation Sans", sans-serif; fill: #fb9b34; text-anchor: middle; }
.term { font: 700 20px "Liberation Mono", monospace; fill: #fff; }
```
